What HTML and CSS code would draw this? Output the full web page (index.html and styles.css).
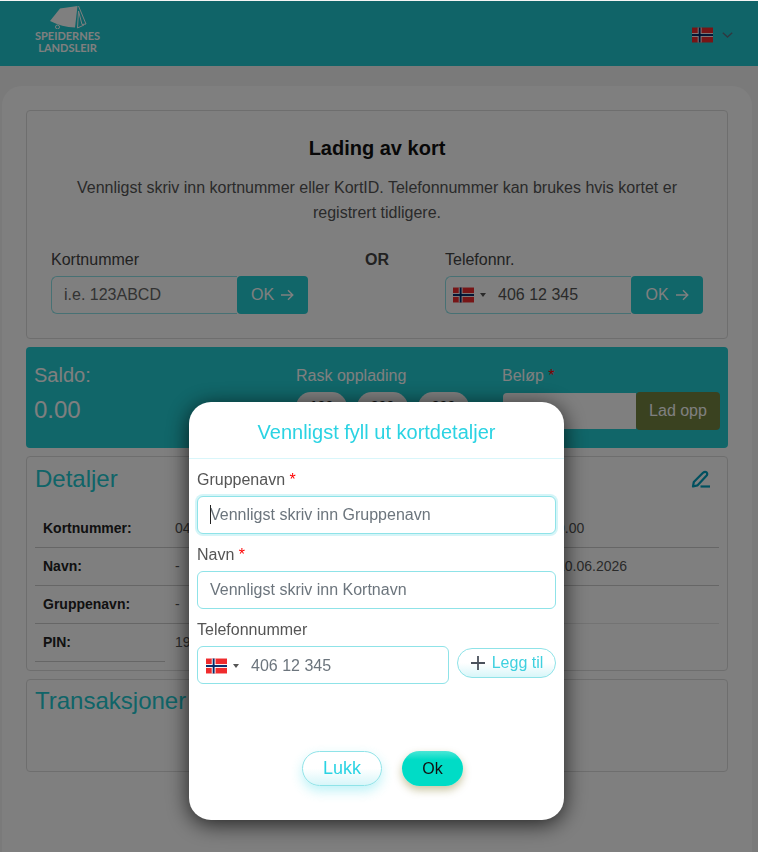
FILE: index.html
```html
<!DOCTYPE html>
<html lang="en">
<head>
  <meta charset="UTF-8" />
  <title>Lading av kort | Speidernes Landsleir</title>
  <link rel="stylesheet" href="styles.css">
</head>
<body>
  <header class="topbar">
    <div class="logo">
      <svg class="logo-tent" width="38" height="24" viewBox="0 0 38 24">
        <path d="M1 16 L11 3.5 L28.5 1 L26 22.5 Q13 22 1 16 Z" fill="currentColor"/>
        <path d="M29.5 1 L37 19 L33 19.5 L29.5 6 L28.5 23 L35 20" fill="none" stroke="currentColor" stroke-width="1"/>
        <circle cx="8.5" cy="22" r="2" fill="none" stroke="currentColor" stroke-width="1"/>
      </svg>
      <div class="logo-text">SPEIDERNES<br>LANDSLEIR</div>
    </div>
    <div class="lang">
      <svg class="flag-lg" viewBox="0 0 22 16"><use href="#no-flag"/></svg>
      <svg width="11" height="6" viewBox="0 0 11 6"><path d="M0.8 0.8 L5.5 5 L10.2 0.8" fill="none" stroke="#607080" stroke-width="1.4"/></svg>
    </div>
  </header>

  <svg width="0" height="0" class="defs">
    <symbol id="no-flag" viewBox="0 0 22 16">
      <rect width="22" height="16" fill="#ef2b2d"/>
      <rect x="6" width="4" height="16" fill="#fff"/>
      <rect y="6" width="22" height="4" fill="#fff"/>
      <rect x="7" width="2" height="16" fill="#002868"/>
      <rect y="7" width="22" height="2" fill="#002868"/>
    </symbol>
  </svg>

  <main class="main-card">
    <section class="panel lookup">
      <h2 class="lookup-title">Lading av kort</h2>
      <p class="lookup-text">Vennligst skriv inn kortnummer eller KortID. Telefonnummer kan brukes hvis kortet er registrert tidligere.</p>
      <div class="lookup-row">
        <div class="lookup-field">
          <label class="lookup-label">Kortnummer</label>
          <div class="input-group">
            <input class="group-input" type="text" placeholder="i.e. 123ABCD">
            <button class="ok-btn">OK <span class="arrow">
              <svg width="14" height="12" viewBox="0 0 14 12"><path d="M1 6 H12.5 M8 1.2 L12.8 6 L8 10.8" fill="none" stroke="currentColor" stroke-width="1.4"/></svg>
            </span></button>
          </div>
        </div>
        <div class="or-text">OR</div>
        <div class="lookup-field wide">
          <label class="lookup-label">Telefonnr.</label>
          <div class="input-group">
            <div class="phone-input group-input">
              <svg class="flag" viewBox="0 0 22 16"><use href="#no-flag"/></svg>
              <span class="caret"></span>
              <span class="phone-number">406 12 345</span>
            </div>
            <button class="ok-btn">OK <span class="arrow">
              <svg width="14" height="12" viewBox="0 0 14 12"><path d="M1 6 H12.5 M8 1.2 L12.8 6 L8 10.8" fill="none" stroke="currentColor" stroke-width="1.4"/></svg>
            </span></button>
          </div>
        </div>
      </div>
    </section>

    <section class="balance">
      <div class="balance-col">
        <div class="balance-label">Saldo:</div>
        <div class="balance-value">0.00</div>
      </div>
      <div class="quick-col">
        <div class="quick-label">Rask opplading</div>
        <div class="quick-pills">
          <span class="pill">100</span>
          <span class="pill">200</span>
          <span class="pill">300</span>
        </div>
      </div>
      <div class="amount-col">
        <div class="quick-label">Beløp <span class="req">*</span></div>
        <div class="amount-group">
          <input class="amount-input" type="text">
          <button class="charge-btn">Lad opp</button>
        </div>
      </div>
    </section>

    <section class="panel details">
      <div class="panel-head">
        <h3 class="panel-title">Detaljer</h3>
        <svg class="edit-icon" width="20" height="18" viewBox="0 0 20 18">
          <path d="M2 16.5 L2.8 12 L12 2.8 Q14 1 15.6 2.4 Q17 4 15.2 6 L6.4 15.4 Z" fill="none" stroke="currentColor" stroke-width="2.2" stroke-linejoin="round"/>
          <path d="M9.5 16.5 H19" stroke="currentColor" stroke-width="2.2"/>
        </svg>
      </div>
      <div class="details-grid">
        <div class="detail-col">
          <div class="detail-row"><b class="detail-key">Kortnummer:</b><span>04</span></div>
          <div class="detail-row"><b class="detail-key">Navn:</b><span>-</span></div>
          <div class="detail-row"><b class="detail-key">Gruppenavn:</b><span>-</span></div>
          <div class="detail-row short"><b class="detail-key">PIN:</b><span>19</span></div>
        </div>
        <div class="detail-col">
          <div class="detail-row"><b class="detail-key"></b><span>0.00</span></div>
          <div class="detail-row"><b class="detail-key"></b><span>10.06.2026</span></div>
          <div class="detail-row faint"><b class="detail-key"></b><span></span></div>
        </div>
      </div>
    </section>

    <section class="panel transactions">
      <h3 class="panel-title">Transaksjoner</h3>
    </section>
  </main>

  <div class="backdrop"></div>

  <div class="modal">
    <h4 class="modal-title">Vennligst fyll ut kortdetaljer</h4>
    <div class="modal-body">
      <label class="field-label">Gruppenavn <span class="req">*</span></label>
      <div class="focus-wrap">
        <input class="field-input focused" type="text" placeholder="Vennligst skriv inn Gruppenavn">
        <span class="text-cursor"></span>
      </div>
      <label class="field-label">Navn <span class="req">*</span></label>
      <input class="field-input" type="text" placeholder="Vennligst skriv inn Kortnavn">
      <label class="field-label">Telefonnummer</label>
      <div class="phone-row">
        <div class="phone-input field-phone">
          <svg class="flag" viewBox="0 0 22 16"><use href="#no-flag"/></svg>
          <span class="caret"></span>
          <span class="phone-number">406 12 345</span>
        </div>
        <button class="add-btn">
          <svg width="16" height="16" viewBox="0 0 16 16"><path d="M8 1 V15 M1 8 H15" stroke="#4a515b" stroke-width="1.8"/></svg>
          Legg til
        </button>
      </div>
    </div>
    <div class="modal-footer">
      <button class="close-btn">Lukk</button>
      <button class="confirm-btn">Ok</button>
    </div>
  </div>
</body>
</html>
```
FILE: styles.css
```css
* {
  box-sizing: border-box;
}

body {
  margin: 0;
  padding-top: 1px;
  height: 852px;
  overflow: hidden;
  font-family: "Liberation Sans", Arial, sans-serif;
  font-size: 16px;
  color: #555;
  background-color: #f5f5f5;
}

input, button {
  font-family: inherit;
  font-size: 16px;
}

.defs {
  display: block;
  height: 0;
}

.topbar {
  height: 65px;
  background-color: #20c9d0;
  display: flex;
  justify-content: space-between;
  align-items: center;
  padding: 0 25px 0 35px;
}

.logo {
  width: 65px;
  display: flex;
  flex-direction: column;
  align-items: center;
  color: #fff;
  margin-top: -9px;
}

.logo-tent {
  display: block;
  margin-left: 1px;
}

.logo-text {
  font-family: Lato, "Liberation Sans", sans-serif;
  font-size: 11px;
  line-height: 11.5px;
  font-weight: bold;
  text-align: center;
  white-space: nowrap;
  margin-top: 1px;
}

.lang {
  display: flex;
  align-items: center;
  gap: 9px;
  margin-top: 3px;
}

.flag-lg {
  width: 21px;
  height: 16px;
}

.main-card {
  margin: 20px 6px 0 2px;
  padding: 24px 24px 40px;
  height: 800px;
  background: #fff;
  border-radius: 20px;
}

.panel {
  border: 1px solid #ddd;
  border-radius: 4px;
  background: #fff;
}

.lookup {
  height: 229px;
  padding: 26px 24px 0;
}

.lookup-title {
  margin: 0;
  font-size: 20px;
  line-height: 22px;
  color: #111;
  text-align: center;
}

.lookup-text {
  margin: 16px 0 0;
  line-height: 25px;
  text-align: center;
}

.lookup-row {
  display: flex;
  margin-top: 25px;
}

.lookup-field {
  width: 257px;
}

.lookup-field.wide {
  width: 258px;
}

.lookup-label {
  display: block;
  line-height: 20px;
  margin-bottom: 6px;
  color: #444;
}

.or-text {
  width: 137px;
  padding-left: 57px;
  font-weight: bold;
  line-height: 20px;
  color: #444;
}

.input-group {
  display: flex;
  height: 38px;
}

.group-input {
  width: 186px;
  flex: none;
  height: 38px;
  border: 1px solid #8fe3e8;
  border-right: none;
  border-radius: 6px 0 0 6px;
  padding: 0 12px;
  background: #fff;
  color: #555;
  outline: none;
}

.group-input::placeholder {
  color: #666;
}

.ok-btn {
  flex: 1;
  height: 38px;
  border: none;
  border-radius: 4px;
  background: #22ccd2;
  color: #fff;
  display: flex;
  align-items: center;
  justify-content: center;
  gap: 6px;
  padding: 0;
}

.arrow {
  display: flex;
}

.phone-input {
  display: flex;
  align-items: center;
}

.flag {
  width: 21px;
  height: 16px;
  flex: none;
}

.caret {
  width: 0;
  height: 0;
  margin-left: 6px;
  border-left: 3px solid transparent;
  border-right: 3px solid transparent;
  border-top: 4px solid #555;
}

.phone-number {
  margin-left: 12px;
  white-space: nowrap;
}

.phone-input.group-input {
  padding: 0 0 0 7px;
}

.balance {
  height: 101px;
  margin-top: 8px;
  background: #22ccd2;
  border-radius: 4px;
  display: flex;
  color: #fff;
}

.balance-col {
  width: 270px;
  padding: 16px 0 0 8px;
}

.balance-label {
  font-size: 20px;
  line-height: 24px;
}

.balance-value {
  font-size: 24px;
  line-height: 28px;
  margin-top: 9px;
}

.quick-col {
  width: 206px;
  padding-top: 19px;
}

.quick-label {
  line-height: 20px;
}

.quick-pills {
  display: flex;
  gap: 10px;
  margin-top: 6px;
}

.pill {
  width: 51px;
  height: 30px;
  border-radius: 15px;
  background: #fff;
  color: #222;
  font-weight: bold;
  font-size: 14px;
  line-height: 28px;
  text-align: center;
}

.amount-col {
  flex: 1;
  padding-top: 19px;
}

.amount-group {
  display: flex;
  align-items: center;
  margin-top: 6px;
  padding-left: 1px;
}

.amount-input {
  width: 133px;
  height: 36px;
  border: none;
  background: #fff;
  border-radius: 4px 0 0 4px;
  outline: none;
}

.charge-btn {
  width: 84px;
  height: 38px;
  border: none;
  border-radius: 4px;
  background: #748440;
  color: #fff;
  padding: 0;
}

.req {
  color: #f00;
}

.details {
  height: 215px;
  margin-top: 8px;
  padding: 8px 8px 0;
}

.panel-head {
  display: flex;
  justify-content: space-between;
  align-items: center;
}

.panel-title {
  margin: 0;
  font-size: 24px;
  line-height: 28px;
  font-weight: normal;
  color: #20c9d0;
}

.edit-icon {
  color: #00a0be;
  margin-right: 8px;
}

.details-grid {
  display: flex;
  margin-top: 17px;
}

.detail-col {
  width: 342px;
}

.detail-row {
  display: flex;
  align-items: center;
  height: 38px;
  padding-bottom: 2px;
  border-bottom: 1px solid #ccc;
  font-size: 14px;
  color: #555;
}

.detail-row.short {
  width: 130px;
  overflow: visible;
}

.detail-row.faint {
  border-bottom-color: #e6e6e6;
}

.detail-key {
  width: 140px;
  padding-left: 8px;
  flex: none;
  color: #222;
}

.detail-col + .detail-col .detail-key {
  width: 180px;
}

.transactions {
  height: 93px;
  margin-top: 8px;
  padding: 7px 8px;
}

.backdrop {
  position: fixed;
  top: 1px;
  left: 0;
  right: 0;
  bottom: 0;
  background: rgba(0, 0, 0, 0.5);
}

.modal {
  position: fixed;
  top: 402px;
  left: 189px;
  width: 375px;
  height: 418px;
  background: #fff;
  border-radius: 22px;
  box-shadow: 0 4px 22px rgba(0, 0, 0, 0.75);
  display: flex;
  flex-direction: column;
}

.modal-title {
  margin: 0;
  height: 57px;
  border-bottom: 1px solid #d9f6fa;
  font-size: 20px;
  font-weight: normal;
  line-height: 60px;
  text-align: center;
  color: #2bd3e3;
}

.modal-body {
  padding: 8px 8px 0;
}

.field-label {
  display: block;
  line-height: 26px;
  height: 29px;
  color: #555;
}

.field-input {
  display: block;
  width: 100%;
  height: 38px;
  margin-bottom: 8px;
  border: 1px solid #8fe3e8;
  border-radius: 6px;
  padding: 0 12px;
  color: #555;
  outline: none;
}

.field-input::placeholder {
  color: #6c757d;
}

.field-input.focused {
  box-shadow: 0 0 0 2px #d5f5f8;
}

.focus-wrap {
  position: relative;
}

.text-cursor {
  position: absolute;
  left: 13px;
  top: 9px;
  width: 1px;
  height: 19px;
  background: #222;
}

.phone-row {
  display: flex;
  gap: 8px;
}

.field-phone {
  width: 252px;
  height: 38px;
  border: 1px solid #8fe3e8;
  border-radius: 6px;
  padding: 1px 0 0 8px;
  color: #6c757d;
}

.add-btn {
  width: 99px;
  height: 30px;
  margin-top: 2px;
  border: 1px solid #8fe3e8;
  border-radius: 15px;
  background: linear-gradient(#fff 50%, #d8f6f9);
  color: #3fd0df;
  display: flex;
  align-items: center;
  justify-content: center;
  gap: 6px;
  padding: 0;
}

.modal-footer {
  display: flex;
  justify-content: center;
  gap: 20px;
  padding-left: 12px;
  margin-top: auto;
  margin-bottom: 34px;
}

.close-btn {
  width: 80px;
  height: 35px;
  border: 1px solid #8fe3e8;
  border-radius: 18px;
  background: linear-gradient(#fff 50%, #d8f6f9);
  color: #2bd3e3;
  font-size: 18px;
  box-shadow: 0 5px 12px rgba(43, 211, 227, 0.3);
  padding: 0;
}

.confirm-btn {
  width: 61px;
  height: 35px;
  border: none;
  border-radius: 18px;
  background: linear-gradient(#4ce6d6, #00dcc6 25%);
  color: #111;
  box-shadow: 0 4px 8px rgba(120, 110, 20, 0.4);
  padding: 0;
}
```
